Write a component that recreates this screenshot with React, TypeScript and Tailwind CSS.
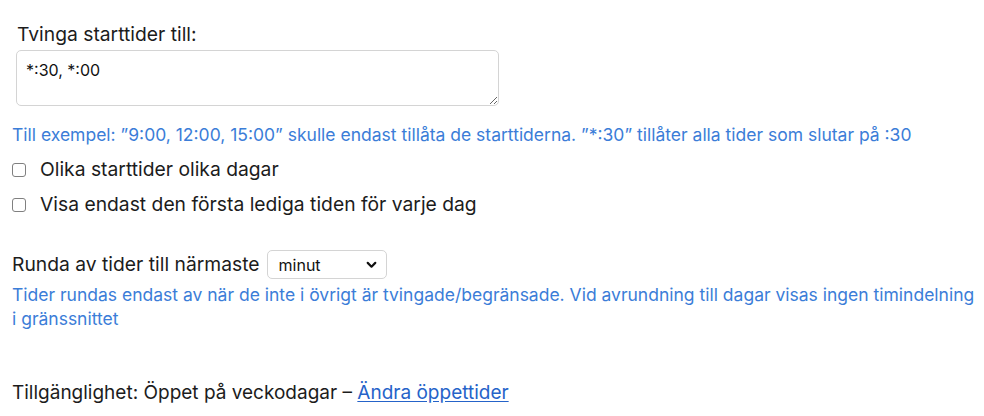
import { useState } from 'react';

export default function App() {
  const [times, setTimes] = useState('*:30, *:00');
  const [perDay, setPerDay] = useState(false);
  const [firstOnly, setFirstOnly] = useState(false);
  const [rounding, setRounding] = useState('minut');

  return (
    <div className="w-[984px] h-[416px] bg-white px-[12px] text-[#1c1c1c] font-['Inter',sans-serif]">
      <div className="pl-[4px] pt-[21px]">
        <label className="block text-[19.3px] leading-[27px] pl-[1px]">Tvinga starttider till:</label>
        <textarea
          value={times}
          onChange={e => setTimes(e.target.value)}
          className="mt-[2px] block w-[483px] h-[56px] rounded-[5px] border border-[#d4d4d4] px-[9px] pt-[10px] text-[16px] leading-[18px] text-[#111] focus:outline-none"
        />
      </div>

      <p className="mt-[17px] text-[17.5px] leading-[24px] text-[#3b7dd8]">
        Till exempel: ”9:00, 12:00, 15:00” skulle endast tillåta de starttiderna. ”*:30” tillåter alla tider som slutar på :30
      </p>

      <div className="mt-[5px]">
        <label className="flex items-center h-[35px] gap-[14px] text-[19.3px]">
          <input
            type="checkbox"
            checked={perDay}
            onChange={e => setPerDay(e.target.checked)}
            className="appearance-none w-[14px] h-[14px] rounded-[3px] border border-[#808080] bg-white checked:bg-[#3b7dd8]"
          />
          Olika starttider olika dagar
        </label>
        <label className="flex items-center h-[35px] gap-[14px] text-[19.3px]">
          <input
            type="checkbox"
            checked={firstOnly}
            onChange={e => setFirstOnly(e.target.checked)}
            className="appearance-none w-[14px] h-[14px] rounded-[3px] border border-[#808080] bg-white checked:bg-[#3b7dd8]"
          />
          Visa endast den första lediga tiden för varje dag
        </label>
      </div>

      <div className="mt-[28px] flex items-center gap-[7px] h-[29px] text-[19.3px]">
        <span>Runda av tider till närmaste</span>
        <div className="relative">
          <select
            value={rounding}
            onChange={e => setRounding(e.target.value)}
            className="appearance-none w-[120px] h-[29px] rounded-[5px] border border-[#d4d4d4] bg-white pl-[11px] text-[16px] text-[#111] focus:outline-none"
          >
            <option value="minut">minut</option>
            <option value="timme">timme</option>
            <option value="dag">dag</option>
          </select>
          <svg
            viewBox="0 0 24 24"
            className="pointer-events-none absolute right-[9px] top-[8px] w-[13px] h-[13px]"
            fill="none"
            stroke="#111"
            strokeWidth="4"
            strokeLinecap="round"
            strokeLinejoin="round"
          >
            <path d="M5 9l7 7 7-7" />
          </svg>
        </div>
      </div>

      <p className="mt-[4px] w-[966px] text-[17.5px] leading-[24px] text-[#3b7dd8]">
        Tider rundas endast av när de inte i övrigt är tvingade/begränsade. Vid avrundning till dagar visas ingen timindelning i gränssnittet
      </p>

      <p className="mt-[48px] text-[19px] leading-[27px]">
        Tillgänglighet: Öppet på veckodagar –{' '}
        <a href="#" className="text-[#2563c9] underline underline-offset-[2px]">Ändra öppettider</a>
      </p>
    </div>
  );
}
